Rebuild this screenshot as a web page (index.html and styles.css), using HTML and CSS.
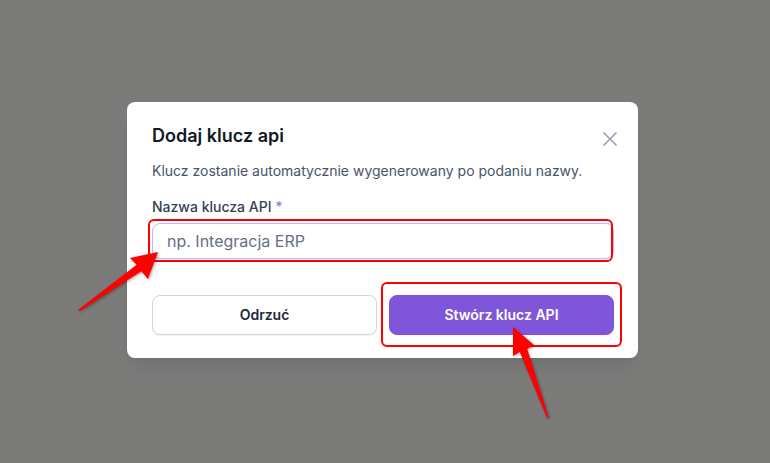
FILE: index.html
```html
<!DOCTYPE html>
<html lang="pl">
<head>
<meta charset="utf-8">
<title>Dodaj klucz api</title>
<link rel="stylesheet" href="styles.css">
</head>
<body>
<div class="modal">
  <div class="modal-header">
    <h2 class="modal-title">Dodaj klucz api</h2>
    <button class="close-btn" aria-label="Zamknij">
      <svg width="14" height="14" viewBox="0 0 14 14"><path d="M1 1L13 13M13 1L1 13" stroke="#98A2B3" stroke-width="1.7" stroke-linecap="round" fill="none"/></svg>
    </button>
  </div>
  <p class="modal-desc">Klucz zostanie automatycznie wygenerowany po podaniu nazwy.</p>
  <div class="field">
    <label class="field-label" for="keyname">Nazwa klucza API <span class="req">*</span></label>
    <input class="field-input" id="keyname" type="text" placeholder="np. Integracja ERP">
  </div>
  <div class="actions">
    <button class="btn btn-secondary">Odrzuć</button>
    <button class="btn btn-primary">Stwórz klucz API</button>
  </div>
</div>

<div class="mark mark-input"></div>
<div class="mark mark-button"></div>
<svg class="arrows" width="770" height="463" viewBox="0 0 770 463">
  <polygon points="78,310 80,311 141.4,271.2 148,279 158,252 130,258 136.6,264.8" fill="#ff0000"/>
  <polygon points="547,418 549,418 527.2,349.1 534,345 513,327 513,356 519.8,351.9" fill="#ff0000"/>
</svg>
</body>
</html>
```
FILE: styles.css
```css
* { box-sizing: border-box; }
html, body { margin: 0; }
body {
  width: 770px;
  height: 463px;
  overflow: hidden;
  background: #7b7c7a;
  font-family: Inter, "Noto Sans", sans-serif;
  padding: 102px 0 0 127px;
  position: relative;
}
.modal {
  width: 511px;
  background: #ffffff;
  border-radius: 8px;
  padding: 20px 24px 23px 25px;
  box-shadow: 0 12px 16px -4px rgba(16,24,40,0.08), 0 4px 6px -2px rgba(16,24,40,0.03);
}
.modal-header {
  display: flex;
  justify-content: space-between;
  align-items: flex-start;
}
.modal-title {
  margin: 0;
  font-size: 18px;
  line-height: 28px;
  font-weight: 600;
  color: #101828;
}
.close-btn {
  border: 0;
  background: none;
  padding: 0;
  margin: 10px -3px 0 0;
  width: 14px;
  height: 14px;
  display: flex;
  cursor: pointer;
}
.modal-desc {
  margin: 11px 0 0;
  font-size: 14px;
  line-height: 20px;
  color: #475467;
}
.field {
  margin-top: 16px;
  display: flex;
  flex-direction: column;
}
.field-label {
  font-size: 14px;
  line-height: 20px;
  font-weight: 500;
  color: #344054;
  margin-bottom: 6px;
}
.req { color: #9E77ED; }
.field-input {
  height: 36px;
  border: 1px solid #c9b2f6;
  border-radius: 8px;
  padding: 0 14px;
  font-family: inherit;
  font-size: 16px;
  color: #101828;
  outline: none;
  box-shadow: 0 1px 2px rgba(16,24,40,0.05);
}
.field-input::placeholder { color: #667085; }
.actions {
  margin-top: 36px;
  display: grid;
  grid-template-columns: 1fr 1fr;
  gap: 12px;
}
.btn {
  height: 40px;
  border-radius: 8px;
  font-family: inherit;
  font-size: 14px;
  font-weight: 600;
  line-height: 20px;
  cursor: pointer;
  box-shadow: 0 1px 2px rgba(16,24,40,0.05);
}
.btn-secondary {
  background: #ffffff;
  border: 1px solid #D0D5DD;
  color: #1D2939;
}
.btn-primary {
  background: #7F56D9;
  border: 1px solid #7F56D9;
  color: #ffffff;
}
.mark {
  position: absolute;
  border: 2px solid #ff0000;
  border-radius: 6px;
  pointer-events: none;
}
.mark-input { left: 148px; top: 219px; width: 465px; height: 43px; }
.mark-button { left: 381px; top: 282px; width: 241px; height: 65px; }
.arrows {
  position: absolute;
  left: 0;
  top: 0;
  pointer-events: none;
  filter: drop-shadow(1px 1px 1.5px rgba(0,0,0,0.35));
}
```
